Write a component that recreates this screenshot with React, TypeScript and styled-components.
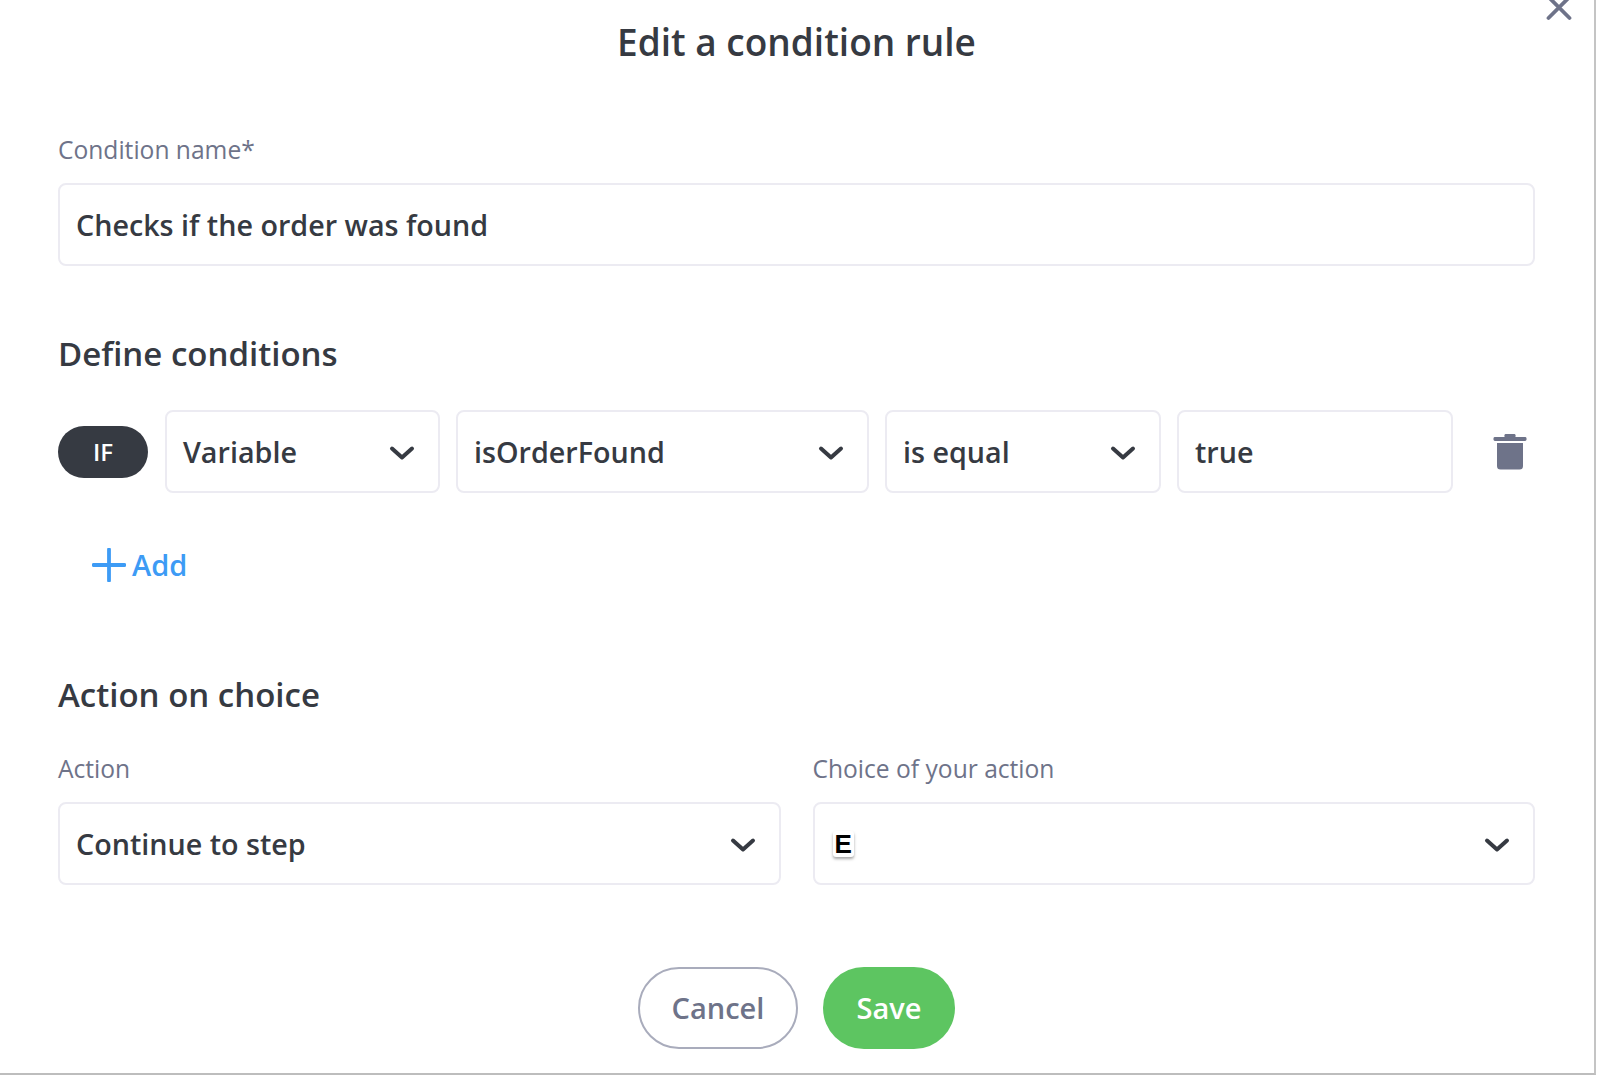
import React from "react";
import styled, { createGlobalStyle } from "styled-components";

const GlobalStyle = createGlobalStyle`
  html, body {
    margin: 0;
    padding: 0;
    background: #fff;
  }
  body {
    font-family: "Open Sans", "Liberation Sans", sans-serif;
    overflow: hidden;
  }
  * {
    box-sizing: border-box;
  }
`;

const ChevronIcon = () => (
  <Chevron width="26" height="16" viewBox="0 0 26 16" fill="none">
    <path d="M3 3.5 L13 12.5 L23 3.5" stroke="#363a42" strokeWidth="4" strokeLinecap="round" strokeLinejoin="round" />
  </Chevron>
);

const Select = ({ value, width }: { value: string; width: string }) => (
  <Field $width={width}>
    <span>{value}</span>
    <ChevronIcon />
  </Field>
);

const App = () => {
  return (
    <>
      <GlobalStyle />
      <Modal>
        <CloseButton>
          <svg width="26" height="22" viewBox="0 0 26 22" fill="none">
            <path d="M2.5 -3 L23.5 18 M23.5 -3 L2.5 18" stroke="#6e7389" strokeWidth="3.8" strokeLinecap="round" />
          </svg>
        </CloseButton>

        <Title>Edit a condition rule</Title>

        <Label>Condition name*</Label>
        <Field $width="100%">Checks if the order was found</Field>

        <SectionTitle>Define conditions</SectionTitle>
        <ConditionRow>
          <IfBadge>IF</IfBadge>
          <Select value="Variable" width="275px" />
          <Select value="isOrderFound" width="413px" />
          <Select value="is equal" width="276px" />
          <Field $width="276px">true</Field>
          <TrashIcon width="34" height="36" viewBox="0 0 34 36">
            <rect x="11.5" y="0" width="11" height="5" rx="1.2" fill="#6e7389" />
            <rect x="0.5" y="3" width="33" height="4" rx="1.4" fill="#6e7389" />
            <path d="M4 9 H30 V32 a3.5 3.5 0 0 1 -3.5 3.5 H7.5 A3.5 3.5 0 0 1 4 32 Z" fill="#6e7389" />
          </TrashIcon>
        </ConditionRow>

        <AddButton>
          <PlusIcon width="34" height="34" viewBox="0 0 34 34" fill="none">
            <path d="M17 1.5 V32.5 M1.5 17 H32.5" stroke="#3d9bf5" strokeWidth="3.8" strokeLinecap="round" />
          </PlusIcon>
          Add
        </AddButton>

        <ActionTitle>Action on choice</ActionTitle>
        <ActionGrid>
          <div>
            <ActionLabel>Action</ActionLabel>
            <Select value="Continue to step" width="100%" />
          </div>
          <div>
            <ActionLabel>Choice of your action</ActionLabel>
            <Field $width="100%">
              <StepKey>E</StepKey>
              <ChevronIcon />
            </Field>
          </div>
        </ActionGrid>

        <Footer>
          <CancelButton>Cancel</CancelButton>
          <SaveButton>Save</SaveButton>
        </Footer>
      </Modal>
    </>
  );
};

const Modal = styled.div`
  position: relative;
  width: 1596px;
  height: 1075px;
  padding: 0 59px 0 58px;
  background: #fff;
  border-right: 2px solid #c4c4c4;
  border-bottom: 2px solid #bdbdbd;
  color: #363a42;
`;

const CloseButton = styled.div`
  position: absolute;
  top: 0;
  right: 22px;
  display: flex;
`;

const Title = styled.h1`
  margin: 0;
  padding-top: 21px;
  font-size: 37px;
  line-height: 42px;
  font-weight: 600;
  text-align: center;
  color: #363a42;
`;

const Label = styled.div`
  margin-top: 72px;
  margin-bottom: 18px;
  font-size: 24.6px;
  line-height: 30px;
  color: #6e7389;
`;

const Field = styled.div<{ $width: string }>`
  display: flex;
  align-items: center;
  justify-content: space-between;
  flex: 0 0 auto;
  width: ${(p) => p.$width};
  height: 83px;
  padding: 0 23px 0 16px;
  background: #fff;
  border: 2px solid #ecebf2;
  border-radius: 8px;
  font-size: 28.7px;
  font-weight: 600;
  color: #363a42;
`;

const Chevron = styled.svg`
  flex: none;
  margin-top: 3px;
`;

const SectionTitle = styled.h2`
  margin: 68px 0 36px;
  font-size: 33px;
  line-height: 40px;
  font-weight: 600;
  color: #363a42;
`;

const ConditionRow = styled.div`
  display: flex;
  align-items: center;
  gap: 16px;
`;

const IfBadge = styled.div`
  display: flex;
  align-items: center;
  justify-content: center;
  width: 90px;
  height: 52px;
  margin-right: 1px;
  padding-bottom: 1px;
  border-radius: 26px;
  background: #363a42;
  color: #fff;
  font-size: 24px;
  font-weight: 600;
`;

const TrashIcon = styled.svg`
  flex: none;
  margin-left: 24px;
`;

const AddButton = styled.div`
  display: flex;
  align-items: center;
  gap: 6px;
  margin: 54px 0 0 34px;
  height: 34px;
  font-size: 29px;
  font-weight: 600;
  color: #3d9bf5;
`;

const PlusIcon = styled.svg`
  flex: none;
  margin-top: 2px;
`;

const ActionTitle = styled(SectionTitle)`
  margin: 94px 0 39px;
`;

const ActionGrid = styled.div`
  display: grid;
  grid-template-columns: 1fr 1fr;
  gap: 32px;
`;

const ActionLabel = styled(Label)`
  margin: 0 0 18px;
`;

const StepKey = styled.span`
  display: inline-block;
  padding: 0 2px;
  margin-left: 2px;
  border-radius: 3px;
  background: #fff;
  box-shadow: 0 2px 3px rgba(0, 0, 0, 0.35);
  font-family: "Liberation Sans", sans-serif;
  font-size: 26px;
  line-height: 26px;
  font-weight: 700;
  color: #000;
`;

const Footer = styled.div`
  display: flex;
  justify-content: center;
  gap: 25px;
  margin-top: 82px;
`;

const CancelButton = styled.div`
  display: flex;
  align-items: center;
  justify-content: center;
  width: 160px;
  height: 82px;
  padding-bottom: 2px;
  border: 2px solid #a9acbc;
  border-radius: 41px;
  font-size: 29px;
  font-weight: 600;
  color: #6e7389;
`;

const SaveButton = styled(CancelButton)`
  width: 132px;
  border: none;
  background: #5dc561;
  color: #fff;
`;

export default App;
